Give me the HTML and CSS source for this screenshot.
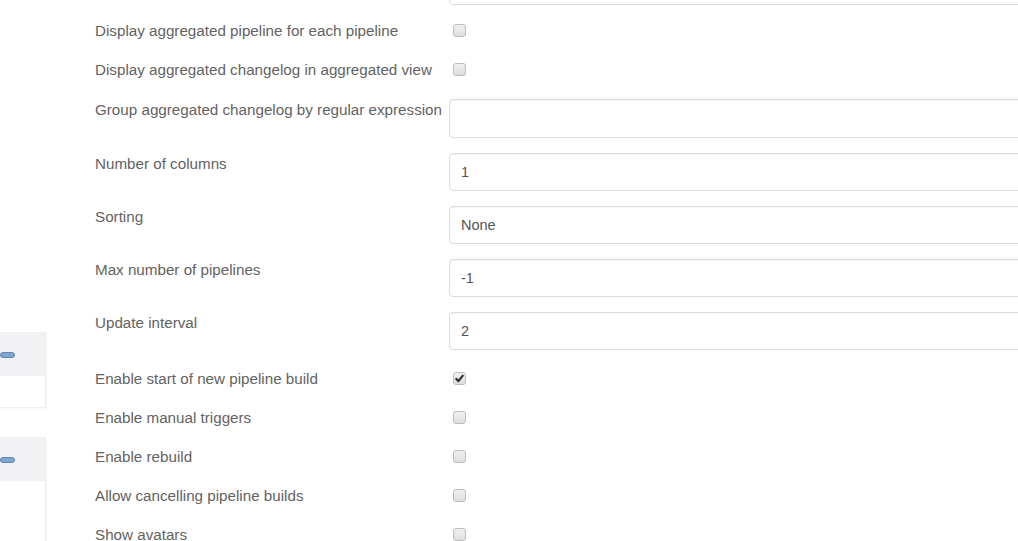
FILE: index.html
```html
<!DOCTYPE html>
<html>
<head>
<meta charset="utf-8">
<link rel="stylesheet" href="styles.css">
</head>
<body>
<div class="page">
  <aside class="side">
    <div class="panel">
      <div class="panel-head"><span class="minus"></span></div>
      <div class="panel-body short"></div>
    </div>
    <div class="panel">
      <div class="panel-head"><span class="minus"></span></div>
      <div class="panel-body tall"></div>
    </div>
  </aside>
  <main class="form">
    <div class="row field first">
      <div class="label"></div>
      <div class="control"><div class="input"></div></div>
    </div>
    <div class="row check lead">
      <div class="label">Display aggregated pipeline for each pipeline</div>
      <div class="control"><span class="box"></span></div>
    </div>
    <div class="row check">
      <div class="label">Display aggregated changelog in aggregated view</div>
      <div class="control"><span class="box"></span></div>
    </div>
    <div class="row field group">
      <div class="label">Group aggregated changelog by regular expression</div>
      <div class="control"><div class="input tall"></div></div>
    </div>
    <div class="row field">
      <div class="label">Number of columns</div>
      <div class="control"><div class="input">1</div></div>
    </div>
    <div class="row field">
      <div class="label">Sorting</div>
      <div class="control"><div class="input">None</div></div>
    </div>
    <div class="row field">
      <div class="label">Max number of pipelines</div>
      <div class="control"><div class="input">-1</div></div>
    </div>
    <div class="row field">
      <div class="label">Update interval</div>
      <div class="control"><div class="input">2</div></div>
    </div>
    <div class="row check lead2">
      <div class="label">Enable start of new pipeline build</div>
      <div class="control"><span class="box checked"><svg viewBox="0 0 13 13" width="13" height="13"><path d="M3.2 6.8 L5.4 9.2 L9.8 3.6" fill="none" stroke="#2b2b2b" stroke-width="2" stroke-linecap="round" stroke-linejoin="round"/></svg></span></div>
    </div>
    <div class="row check">
      <div class="label">Enable manual triggers</div>
      <div class="control"><span class="box"></span></div>
    </div>
    <div class="row check">
      <div class="label">Enable rebuild</div>
      <div class="control"><span class="box"></span></div>
    </div>
    <div class="row check">
      <div class="label">Allow cancelling pipeline builds</div>
      <div class="control"><span class="box"></span></div>
    </div>
    <div class="row check">
      <div class="label">Show avatars</div>
      <div class="control"><span class="box"></span></div>
    </div>
  </main>
</div>
</body>
</html>
```

FILE: styles.css
```css
html, body {
  margin: 0;
  padding: 0;
  overflow: hidden;
  background: #ffffff;
  height: 541px;
}
body {
  font-family: "Liberation Sans", Arial, sans-serif;
  font-size: 15.2px;
  color: #636363;
}
.page {
  display: flex;
  align-items: flex-start;
  width: 1018px;
  height: 541px;
  overflow: hidden;
}
.side {
  flex: 0 0 46px;
  padding-top: 332px;
  display: flex;
  flex-direction: column;
  gap: 29px;
}
.panel {
  width: 45px;
  border-right: 1px solid #ececec;
  box-shadow: 1px 1px 2px rgba(0,0,0,0.04);
}
.panel-head {
  height: 44px;
  background: #f2f2f4;
  display: flex;
  align-items: center;
  padding-top: 2px;
  box-sizing: border-box;
}
.minus {
  display: block;
  width: 15px;
  height: 6px;
  border-radius: 3px;
  background: #7ea6d2;
  border: 1px solid #5b86b6;
  box-sizing: border-box;
}
.panel-body {
  background: #fff;
  border-bottom: 1px solid #f0f0f0;
}
.panel-body.short { height: 31px; }
.panel-body.tall { height: 80px; }

.form {
  margin-left: 49px;
  margin-top: -35px;
  display: flex;
  flex-direction: column;
  flex: 0 0 auto;
}
.row {
  display: grid;
  grid-template-columns: 354px 620px;
  flex-shrink: 0;
}
.label {
  line-height: 20px;
  white-space: nowrap;
}
.row.check {
  height: 39px;
  align-items: center;
}
.row.check .label { padding-top: 1px; }
.row.check.lead { margin-top: 6px; }
.row.check.lead2 { margin-top: 8px; height: 40px; }
.row.field { margin-top: 15px; align-items: start; }
.row.field.first { margin-top: 0; }
.row.field.group { margin-top: 10px; }
.row.field .label { padding-top: 1px; }

.control {
  display: flex;
  align-items: center;
}
.input {
  box-sizing: border-box;
  width: 620px;
  height: 38px;
  border: 1px solid #dcdcdc;
  border-radius: 4px;
  padding: 0 11px;
  display: flex;
  align-items: center;
  color: #555;
  font-size: 14.5px;
  box-shadow: inset 0 1px 1px rgba(0,0,0,0.04);
}
.input.tall { height: 39px; }
.row.field.first .input { height: 40px; }

.box {
  box-sizing: border-box;
  width: 13px;
  height: 13px;
  margin-left: 4px;
  border: 1px solid #bdbdbd;
  border-radius: 3px;
  background: linear-gradient(#f0f0f0, #dedede);
  display: block;
  position: relative;
}
.box svg {
  position: absolute;
  left: -1px;
  top: -1px;
}
```
